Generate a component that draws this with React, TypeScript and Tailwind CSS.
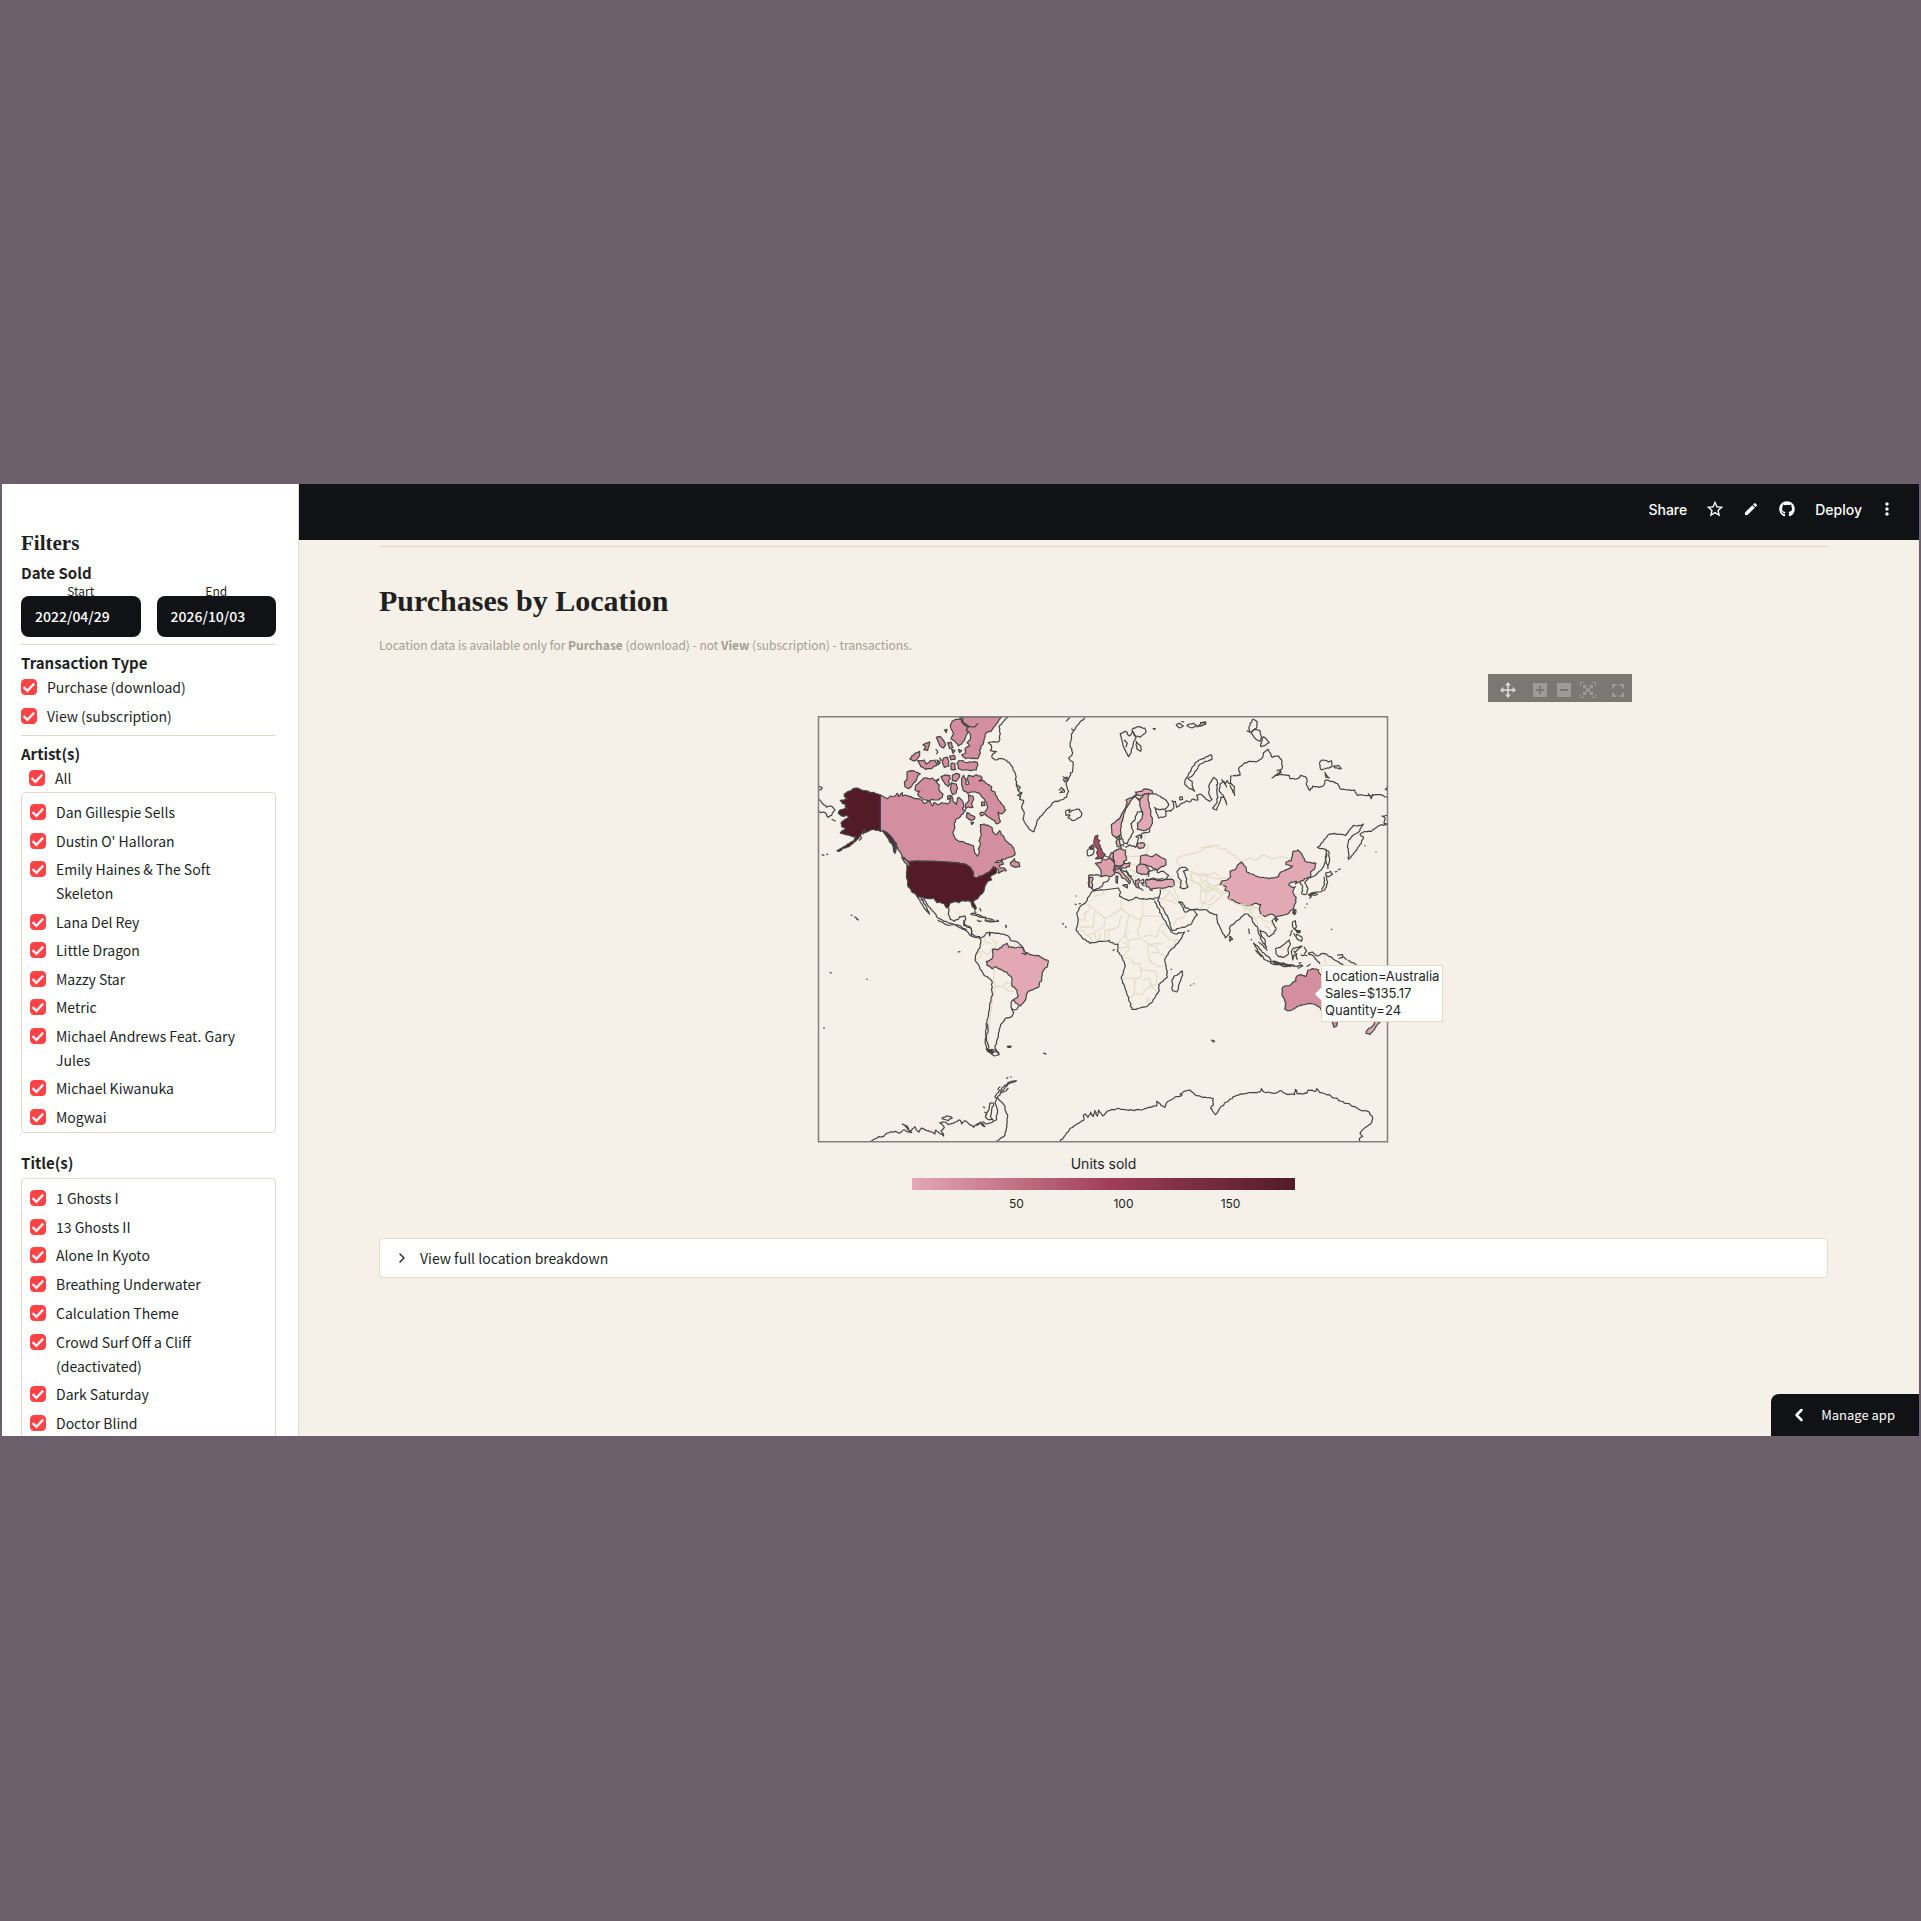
import { useState } from 'react';
import { ChevronRight, ChevronLeft } from 'lucide-react';
import { MdOutlineStarBorder, MdEdit, MdMoreVert } from 'react-icons/md';
import { FaGithub } from 'react-icons/fa';

const artists = [
  'Dan Gillespie Sells',
  "Dustin O' Halloran",
  'Emily Haines & The Soft Skeleton',
  'Lana Del Rey',
  'Little Dragon',
  'Mazzy Star',
  'Metric',
  'Michael Andrews Feat. Gary Jules',
  'Michael Kiwanuka',
  'Mogwai',
];

const titles = [
  '1 Ghosts I',
  '13 Ghosts II',
  'Alone In Kyoto',
  'Breathing Underwater',
  'Calculation Theme',
  'Crowd Surf Off a Cliff (deactivated)',
  'Dark Saturday',
  'Doctor Blind',
];

// Map shapes are grouped in sheets, three units to a pixel, each with its own origin
type Shape = { fill?: string; pts: string };
type Sheet = { at: [number, number]; land: Shape[]; coast: string[]; borders: string[] };

const US = '#531b26';
const CANADA = '#d38f9f';
const LOW = '#e2a9b5';
const MID = '#de9eac';
const UK = '#ae4d68';
const INK = '#454545';

const sheets: Sheet[] = [
  // North America and Greenland
  {
    at: [815, 710],
    land: [
      { fill: CANADA, pts: '196,255 206,260 218,266 226,258 240,258 246,250 250,260 262,248 262,258 274,256 290,262 306,266 322,272 326,280 344,272 352,288 356,278 372,284 380,278 398,282 406,272 400,262 410,258 414,272 424,284 430,262 440,270 446,284 442,296 452,300 444,312 436,320 424,326 418,340 420,352 414,366 420,384 430,392 440,394 452,400 464,404 476,408 478,424 486,438 492,430 490,416 496,404 492,392 498,378 496,362 496,344 508,342 522,348 532,354 534,366 544,374 554,362 562,376 572,392 588,404 598,422 600,434 590,440 576,444 562,448 548,452 540,458 556,456 562,452 566,462 552,466 556,474 570,476 574,482 560,484 550,490 550,480 540,472 536,470 528,480 514,490 500,498 484,504 474,498 474,484 466,472 448,462 420,458 360,454 300,453 284,455 272,450 262,440 258,430 250,420 246,408 240,396 228,380 214,368 204,362 196,364 196,310' },
      { fill: CANADA, pts: '586,458 598,446 600,454 612,458 614,470 602,472 588,466' },
      { fill: US, pts: '196,255 180,250 158,243 140,240 124,234 112,238 100,244 88,252 90,262 98,266 88,270 76,272 82,280 94,284 90,290 98,296 88,296 72,302 70,310 80,318 98,316 100,324 88,330 78,340 80,350 92,355 82,362 76,368 92,374 104,376 122,380 118,390 104,400 84,412 66,422 68,424 92,414 112,402 130,386 138,372 150,358 144,372 160,364 176,358 196,364 196,310' },
      { fill: US, pts: '284,455 300,453 360,454 420,458 448,462 466,472 474,484 474,498 484,504 500,498 514,490 528,480 536,470 544,476 546,486 534,494 526,502 530,510 518,514 512,524 508,536 500,552 490,562 478,572 474,574 478,582 484,594 480,600 472,590 468,576 458,572 440,572 432,578 418,574 404,580 400,592 396,594 386,580 376,576 366,578 356,564 340,566 322,562 306,558 294,548 284,534 278,520 274,500 276,480 276,466 284,468' },
      { fill: '#4a3038', pts: '204,364 216,368 228,380 236,392 242,406 246,416 238,410 226,398 218,384' },
      { fill: CANADA, pts: '276,186 288,182 302,186 316,192 306,202 302,214 292,224 282,236 270,230 268,216 276,208' },
      { fill: CANADA, pts: '302,226 318,212 326,204 340,206 352,204 360,212 372,206 364,216 374,226 372,240 384,252 380,264 366,270 352,268 344,274 330,270 316,262 308,252 314,244 300,240' },
      { fill: CANADA, pts: '378,200 392,194 404,196 406,206 400,212 406,222 400,230 390,222 384,212' },
      { fill: CANADA, pts: '412,196 424,190 434,194 430,206 422,214 412,212' },
      { fill: CANADA, pts: '410,218 424,222 428,236 422,250 412,254 406,238' },
      { fill: CANADA, pts: '398,258 406,256 408,266 398,268' },
      { fill: CANADA, pts: '440,204 446,196 452,208 454,224 462,222 456,206 460,196 474,200 484,194 498,198 502,206 492,214 506,212 516,222 530,230 528,240 540,246 546,260 552,272 568,290 572,300 560,312 550,306 552,316 556,336 546,342 534,330 522,322 510,312 498,318 494,310 510,306 518,294 516,280 508,268 498,256 486,248 472,246 458,250 444,240 440,222' },
      { fill: CANADA, pts: '460,254 474,258 476,268 470,280 474,292 460,290 452,296 452,282 462,270' },
      { fill: CANADA, pts: '456,308 468,316 480,322 474,330 462,328 454,322' },
      { fill: CANADA, pts: '500,276 508,276 510,286 500,288' },
      { fill: CANADA, pts: '468,336 476,338 470,344' },
      { fill: CANADA, pts: '432,152 444,152 458,158 472,156 486,156 488,168 484,180 466,182 446,180 430,176 426,160' },
      { fill: CANADA, pts: '412,34 422,28 436,26 444,40 456,52 462,62 456,72 448,92 440,102 430,108 420,94 408,86 416,72 410,60 406,46' },
      { fill: CANADA, pts: '434,21 560,21 548,38 536,52 528,64 514,68 510,80 506,96 498,108 494,120 496,130 488,146 470,146 452,146 440,134 452,128 450,116 464,108 456,98 466,88 464,70 454,60 462,50 446,42' },
      { fill: CANADA, pts: '284,146 300,130 314,124 314,136 304,150 294,152' },
      { fill: CANADA, pts: '308,152 328,150 334,162 346,152 360,150 366,166 350,176 332,178 318,170' },
      { fill: CANADA, pts: '364,82 376,80 386,92 392,104 386,114 374,106' },
      { fill: CANADA, pts: '398,98 408,96 414,112 404,116' },
      { fill: CANADA, pts: '324,104 344,96 342,108 338,122 326,120 332,110' },
      { fill: CANADA, pts: '386,144 398,142 402,168 388,172 382,156' },
      { fill: CANADA, pts: '404,138 418,136 420,148 408,150' },
      { fill: CANADA, pts: '408,160 420,162 422,178 408,178' },
      { fill: CANADA, pts: '366,150 376,158 370,164' },
      { fill: CANADA, pts: '430,118 440,122 434,128' },
      { fill: CANADA, pts: '388,60 396,58 394,68' },
      { fill: CANADA, pts: '410,118 420,122 414,130' },
      { fill: CANADA, pts: '260,442 274,450 286,464 280,468 268,456' },
      { fill: INK, pts: '234,404 242,414 240,430 236,424' },
    ],
    coast: [
      '440,22 446,38 462,50 480,50 490,40',
      '362,118 368,128 364,132',
      '374,142 380,150 374,152',
      '306,558 316,576 326,592 338,606 344,612 336,594 326,580 318,566 328,570 336,582 348,598 360,610 368,624 386,634 408,640 430,646 444,655 456,660',
      '400,592 400,610 406,628 418,634 430,628 434,620 450,618 452,626 446,640 456,648 464,650 470,662 470,680',
      '466,612 480,610 500,618 514,624 502,622 484,616 466,612',
      '510,626 530,628 538,634 524,636 510,632 512,626',
      '486,630 496,634',
      '544,630 552,634',
      '478,604 484,608',
      '494,594 498,604',
      '572,646 574,654',
      '108,614 112,617',
      '118,620 124,624 130,630 124,626',
      '20,434 28,436',
      '34,434 40,432',
      '132,392 140,382 136,390',
      '11,230 22,234 18,240 11,238',
      '11,266 34,292 48,288 60,300 50,316 40,322 30,308 18,308 11,304',
      '50,328 62,334',
      '580,22 568,32 552,50 556,72 552,94 520,98 530,110 526,122 544,124 530,138 540,150 556,146 574,150 590,168 600,190 604,220 608,240 620,250 614,268 626,272 620,290 628,310 624,326 634,346 646,360 657,366',
      '606,224 616,232 610,242',
      '616,262 608,256 622,246',
    ],
    borders: ['430,640 434,652 446,652'],
  },
  // Europe and the Arctic
  {
    at: [1020, 710],
    land: [
      { fill: LOW, pts: '274,344 288,334 302,320 314,298 322,280 318,270 334,264 350,252 346,246 366,244 370,238 384,238 396,242 396,252 386,250 374,252 360,258 348,256 334,270 322,290 314,308 308,326 304,350 302,374 288,384 276,372' },
      { fill: LOW, pts: '348,262 360,270 374,252 386,250 384,262 388,280 392,310 398,338 388,356 372,362 352,358 352,340 366,326 368,306 360,288 358,272' },
      { fill: LOW, pts: '288,396 298,386 300,402 304,412 292,410' },
      { fill: LOW, pts: '350,402 364,398 374,402 370,414 358,416 350,410' },
      { fill: UK, pts: '226,378 234,376 232,388 240,392 236,402 244,416 248,428 256,434 250,442 236,446 226,446 236,438 230,428 234,418 226,408 222,392' },
      { fill: UK, pts: '208,412 218,404 222,414 212,418' },
      { fill: MID, pts: '226,460 242,458 246,446 258,450 270,444 284,456 286,466 280,480 284,492 270,500 258,496 244,500 242,480 234,468' },
      { fill: LOW, pts: '280,426 294,418 304,416 316,420 318,438 320,450 310,456 316,466 296,468 284,464 280,448' },
      { fill: LOW, pts: '268,442 274,428 280,430 280,448 284,456' },
      { fill: LOW, pts: '284,468 300,472 312,460 330,458 328,470 312,474 296,476 286,482' },
      { fill: LOW, pts: '284,478 300,474 306,486 320,500 332,514 328,522 318,508 304,500 298,490 286,488' },
      { fill: LOW, pts: '308,526 322,524 322,534' },
      { fill: LOW, pts: '288,498 294,500 292,520 288,516' },
      { fill: LOW, pts: '208,502 218,502 216,534 206,530' },
      { fill: LOW, pts: '362,438 380,434 396,440 408,432 420,440 438,450 438,464 424,470 412,480 400,476 394,470 380,466 360,462' },
      { fill: LOW, pts: '350,470 362,462 378,466 388,480 382,492 366,494 350,486' },
      { fill: LOW, pts: '376,510 400,508 424,512 446,508 460,510 462,528 440,532 420,534 396,538 380,530 378,518' },
      { fill: LOW, pts: '346,512 356,506 360,514 354,520 358,534 348,530' },
    ],
    coast: [
      '42,366 52,330 70,310 90,290 96,280 120,270 140,262 146,244 138,222 148,200 158,180 160,160 146,144 158,128 150,100 156,70 168,50 184,32 194,22',
      '116,240 124,232 134,246 120,248 130,240',
      '128,200 144,206 134,216 130,208 142,200',
      '138,34 150,24',
      '154,56 162,62',
      '136,304 150,298 148,308 164,300 178,298 186,310 180,322 160,332 144,324 150,316 138,316 136,304',
      '300,70 316,64 328,78 338,64 348,84 340,100 334,124 326,140 316,120 308,100 300,70',
      '312,90 322,100 318,112',
      '336,58 352,50 374,54 378,66 360,82 344,76 336,58',
      '348,94 362,108 362,124 350,116 348,94',
      '398,56 406,56 402,60',
      '468,44 480,40 490,48 478,54 468,44',
      '484,34 492,36',
      '500,46 520,40 530,46 516,54 500,46',
      '530,52 544,38 558,36 548,46 530,52',
      '574,134 576,148 556,154 540,162 530,180 518,196 504,206 516,214 518,232 524,244 504,232 494,222 498,206 506,190 516,172 530,156 548,146 562,140 574,134',
      '396,248 420,258 440,272 446,286 434,298 420,300 404,292 408,306 416,324 430,322 438,318 436,302 452,304 462,290 456,272 466,274 470,292 486,280 500,272 510,276 516,268 534,270 530,256 540,252',
      '478,262 486,260 488,268 480,270 478,262',
      '302,374 312,400 322,402 330,384 340,364 332,342 346,326 352,306 364,304 368,316',
      '288,386 298,378 304,390',
      '300,406 310,404 312,410',
      '316,412 328,404 346,412 352,402 356,384 348,380 360,374 364,386 366,370 388,366 390,358',
      '202,420 212,412 222,420 218,434 204,438 202,420',
      '256,438 266,442',
      '206,530 206,496 230,494 246,500',
      '268,502 262,514 250,518 246,530 232,536 220,540 214,534',
      '300,480 316,484 330,500 340,514 346,526',
      '318,480 326,494 336,502',
      '384,500 388,484 400,480 412,480 412,488 430,484 446,496 440,506 420,508 400,504 384,510 378,506',
      '362,512 370,508 372,520 364,518 374,528',
      '358,534 370,542',
      '388,540 398,542',
      '470,486 480,474 496,472 504,480 490,484 496,498 500,506 498,516 504,530 494,536 480,532 484,512 474,498 470,486',
    ],
    borders: [
      '470,450 476,440 510,432 540,424 560,412 580,410 600,408',
      '470,450 472,464 484,466',
      '504,482 520,486 540,500 560,496 580,504 600,508',
      '510,500 520,486',
      '540,500 548,520 580,540 600,536',
      '510,510 530,520 560,540 556,570',
      '448,520 466,510 480,520',
      '442,500 466,498',
      '376,364 372,396',
      '374,402 384,406 378,430',
      '318,438 340,440 362,438',
      '320,430 318,418',
      '330,462 350,466',
      '330,478 346,486 340,500',
      '350,494 346,510',
    ],
  },
  // Siberia, China, Japan
  {
    at: [1200, 710],
    land: [
      { fill: LOW, pts: '124,456 138,472 140,486 158,492 172,500 206,506 236,500 240,488 262,478 278,468 258,464 258,456 274,452 278,426 294,420 304,430 314,452 336,460 348,460 344,476 332,486 332,500 314,506 298,516 286,522 290,514 274,516 266,524 276,532 286,530 278,546 288,560 288,576 280,596 268,608 248,616 228,622 214,612 196,620 184,612 178,598 182,584 164,580 148,588 128,584 104,574 84,566 88,546 74,540 78,530 60,524 64,514 82,510 92,500 90,484 104,480 112,466' },
      { fill: LOW, pts: '226,624 234,628 228,635' },
      { fill: INK, pts: '326,554 338,548 348,550 334,556' },
    ],
    coast: [
      '0,252 14,262 28,274 36,268 26,250 28,224 42,202 52,214 50,240 54,262 46,284 38,294 50,300 58,280 62,262 72,262 80,284 76,270 70,256 58,244 60,222 70,214 80,232',
      '64,208 76,222 82,212 90,222 92,198 104,196 120,196 116,176 130,162 150,154 172,154 188,142 190,128 204,118 212,130 216,142 236,138 246,154 246,176 236,190 216,204 228,196 244,194 268,196 270,206 292,206 302,196 320,204 320,226 330,242 338,228 356,232 370,228 376,210 396,214 414,222 420,236 440,240 464,240 472,256 492,256 512,258 530,254 548,256 562,262',
      '230,184 240,180 244,188 232,192',
      '504,250 514,266 518,252',
      '90,218 104,230 104,256 98,240 90,226',
      '146,66 150,40 160,28 172,36 170,54 158,62 146,66',
      '152,70 164,58 180,62 184,80 180,94 164,84 152,70',
      '140,62 150,66',
      '182,110 190,80 200,88 208,98 196,106 182,110',
      '358,160 366,150 380,152 386,156 394,152 396,170 380,174 364,180 358,160',
      '400,168 414,166 424,176 406,174 400,168',
      '374,186 380,196 388,204 378,202 374,186',
      '562,230 556,238 562,240',
      '562,316 546,318 556,326 552,340 562,342 540,346 524,356 514,364 490,366 480,374 490,380 484,400 470,420 456,436 446,448 446,430 442,410 446,390 462,374 476,366 490,342 478,346 460,346 450,358 438,376 416,372 388,372 376,386 362,404 352,412 364,416 376,418 380,430 376,456 366,476 350,492 330,504',
      '376,418 386,424 388,456 384,476 378,452 378,430',
      '300,516 308,530 306,552 320,552 324,536 314,518 328,504',
      '376,490 392,484 398,492 386,500 378,496 376,490',
      '378,498 382,520 374,540 362,546 346,546 330,552',
      '372,500 374,524 364,538',
      '326,556 334,560 328,566',
      '340,556 354,552',
      '404,486 412,484',
      '414,480 422,476',
      '494,406 496,409',
      '526,426 530,426',
      '320,584 322,580',
      '314,594 316,592',
      '282,598 288,600 284,614 280,610 282,598',
      '0,38 14,36 18,42 6,46',
    ],
    borders: [
      '0,412 20,410 40,404 60,416 78,416 86,428 104,436 124,454 150,444 166,452 190,434 216,446 250,440 276,454',
      '0,490 20,494 44,488 64,504 84,506',
      '10,510 30,520 20,534 50,524 60,524',
      '0,540 24,548 40,536 62,548 78,540',
      '0,580 30,572 44,554',
      '100,574 130,588 144,592',
      '132,592 146,600 160,592 176,598',
      '150,600 150,616 164,624 174,640',
    ],
  },
  // South America and West Antarctica
  {
    at: [815, 920],
    land: [
      { fill: LOW, pts: '532,88 548,90 560,82 576,70 582,82 600,84 622,82 630,96 644,104 668,106 686,116 700,122 698,138 684,154 680,176 672,200 656,208 640,214 634,224 632,238 616,258 594,240 610,228 606,210 590,196 590,172 572,156 556,148 540,140 532,146 516,136 514,124 530,118 534,104' },
      { fill: INK, pts: '514,386 526,390 538,396 532,400 518,394' },
      { fill: INK, pts: '577,379 589,379 586,382 579,382' },
    ],
    coast: [
      '368,0 386,10 402,16 420,14 432,22 450,30 462,42 480,52 496,56 494,50 480,48 470,40 468,24 446,16 446,0',
      '496,54 508,48 514,38 524,36 524,48 528,38 540,40 562,42 580,48 586,60 610,68 622,80 628,96',
      '620,100 632,104 636,96',
      '496,56 496,78 484,100 480,120 494,142 510,168 530,182 532,220 524,262 516,300 512,340 510,368 516,390 530,400',
      '516,310 520,330 514,350 518,370 522,384',
      '552,404 540,384 546,360 550,340 556,320 570,296 590,290 596,278 588,262 590,244 594,240',
      '588,266 600,270 612,258',
      '524,390 540,390 552,404 538,408 528,402',
      '684,400 694,404',
      '428,96 436,95',
      '44,157 50,160',
      '154,178 158,178',
      '26,322 28,326',
      '742,11 746,12',
      '751,19 753,22',
      '572,14 574,22',
      '492,5 500,3',
      '514,5 552,3',
      '168,664 190,650 206,650 214,640 240,634 252,640 264,630 290,638 276,624 262,612 276,618 284,634 300,620 312,636 320,624 340,632 360,642 362,630 370,636 386,648 378,632 388,622 374,608 390,606 400,614 420,606 434,600 440,612 450,602 462,612 476,622 492,610 510,620 498,606 484,616',
      '504,604 512,612 530,608 544,600 548,570 540,548 550,528 560,514 580,492 604,482 584,486 566,500 552,512 540,530',
      '556,520 574,512 580,504',
      '538,530 550,536 568,556 578,590 576,620 566,650 544,664',
      '504,560 510,564',
      '508,576 516,580 512,590 520,572 524,550 536,550 526,590 534,600 518,598 510,590',
      '380,596 394,588 412,594 400,602 380,596',
      '548,510 556,500',
      '574,476 580,472',
      '586,472 590,470',
    ],
    borders: [
      '530,60 544,66 542,82 532,88',
      '508,48 510,66 530,72',
      '484,104 500,92 516,104 530,92',
      '484,120 496,112 502,98',
      '516,138 530,148 538,150 536,180 542,198 532,240 526,290 520,340 518,380',
      '542,200 566,200 572,188 588,190',
      '566,200 582,214 604,212',
      '586,62 588,78',
      '600,68 600,82',
    ],
  },
  // Africa, southern Asia, Oceania and East Antarctica
  {
    at: [1060, 860],
    land: [
      { fill: CANADA, pts: '744,330 756,326 776,330 778,340 784,346 810,360 820,420 784,452 776,440 760,432 740,432 716,438 700,448 682,452 674,446 678,430 666,400 668,382 690,376 708,362 708,352 724,344 738,350' },
      { fill: CANADA, pts: '816,484 832,486 830,498 822,502' },
      { fill: LOW, pts: '962,484 950,496 940,512 930,524 918,520 922,510 938,498 948,484' },
      { fill: INK, pts: '706,208 712,212 720,212 720,218 712,218' },
      { fill: INK, pts: '640,308 654,308 676,313 690,316 664,314' },
    ],
    coast: [
      '96,94 130,90 176,84 182,96 178,108 206,122 218,118 226,112 250,116 280,118 298,110 300,88',
      '96,94 84,112 78,126 62,138 50,160 54,184 48,210 66,232 90,250 120,244 148,242 162,252 174,252 172,274 186,292 196,318 190,336 184,356 196,388 206,416 216,448 240,444 260,440 278,424 290,402 298,392 296,374 322,352 320,330 314,298 330,272 350,252 366,232 374,216 346,222 334,216 320,194 306,168 292,142 284,122',
      '298,112 294,124 312,152 328,184 336,212 362,204 392,194 412,164 404,152 392,150 374,156 364,136 356,126 368,128 374,142 388,148 404,148 440,150 456,160 470,164 472,182 484,210 496,234 508,222 510,200 528,184 552,164 564,162 574,172 582,190 592,200 596,220 604,240 620,262 616,244 604,226 600,210 616,218 628,230 642,220 648,204 636,182 648,170',
      '508,228 518,238 510,244 508,228',
      '368,332 368,346 358,370 350,396 338,392 336,364 342,348 356,342 368,332',
      '580,248 596,262 616,284 632,298 632,306 616,300 598,278 584,256 580,248',
      '630,304 652,306 676,312 702,316 680,320 650,314 630,308',
      '586,270 592,278 606,290',
      '700,320 728,316',
      '712,324 730,318',
      '740,320 752,312',
      '596,246 612,262 622,272',
      '646,266 660,262 676,250 688,240 690,256 684,268 684,284 672,292 656,290 648,280 646,266',
      '694,272 700,264 716,262 726,258 712,270 702,274 710,282 712,298 704,284 698,300 696,284 694,272',
      '698,186 706,182 710,200 704,208 698,200 698,186',
      '710,222 720,228 726,232 724,244 712,238 708,230 710,222',
      '698,210 690,228',
      '700,220 706,230',
      '732,260 740,272 734,282',
      '722,284 742,288',
      '744,280 758,276 772,288 790,280 812,290 832,304 850,314',
      '744,280 760,288 770,300 780,312',
      '716,310 724,308',
      '832,286 848,284 848,292 836,296',
      '850,290 860,300',
      '864,300 878,308 890,314',
      '566,206 568,222',
      '572,238 576,240',
      '700,152 704,148 702,162 698,158 700,152',
      '814,206 816,210',
      '452,540 464,544 456,546',
      '44,132 50,134',
      '56,132 62,130',
      '46,108 50,108',
      '8,190 11,193',
      '16,199 19,202',
      '332,328 336,328',
      '390,376 394,376',
      '400,372 403,371',
      '382,214 388,212',
      '158,272 164,268',
      '0,844 14,828 28,808 50,792 72,780 70,766 76,762 84,772 92,756 100,770 104,752 112,768 116,750 128,768 144,752 170,746 200,750 240,750 266,742 290,738 290,724 314,742 320,728 344,712 366,706 360,702 372,694 390,690 404,704 430,712 460,716 460,736 452,744 466,764 480,744 500,726 530,706 560,700 600,696 604,686 612,696 640,700 664,692 684,704 704,704 706,688 712,702 740,700 744,690 768,694 770,686 780,698 808,704 816,712 830,714 836,722 860,730 884,740 900,750 924,754 938,772 932,792 912,806 900,820 908,830 898,836 900,846',
    ],
    borders: [
      '248,116 248,168 306,168',
      '248,168 240,196 232,210 238,230',
      '182,118 184,146 206,164 240,180 246,170',
      '100,110 132,100 128,90',
      '50,178 74,180 74,158 88,150 88,136 78,132',
      '88,136 104,150 134,174 150,168 184,146',
      '104,150 100,200 70,202 54,198',
      '134,174 132,200 116,210 100,214',
      '182,168 176,200 150,210 132,212',
      '206,164 200,200 194,224 206,240',
      '54,212 70,212 80,226 92,232 96,248',
      '80,226 104,220 110,244',
      '134,212 136,242',
      '120,218 118,244',
      '146,210 148,240',
      '174,250 190,230 206,216',
      '190,250 214,240 240,234 268,254 290,250 310,252',
      '250,230 270,226 290,230 300,200 316,188',
      '304,212 330,240 352,240 340,256 318,262',
      '174,262 200,262 206,250',
      '186,292 206,270 206,256',
      '190,294 214,296 222,312 240,310 246,330 262,330',
      '264,256 264,276 268,300 272,310',
      '272,276 296,278 316,290',
      '268,300 290,320 318,318',
      '264,256 290,260 296,278',
      '186,354 236,356 244,338 240,320',
      '224,358 224,380 222,404 206,416',
      '224,402 246,404 254,390 272,376 268,356 246,360',
      '272,376 288,374 292,340 276,332 262,332',
      '270,376 286,390 292,396',
      '258,418 266,414 268,424 260,426 258,418',
      '300,92 320,88 330,96 318,110 302,116',
      '330,96 348,120 356,126',
      '302,116 330,122 350,132',
      '350,178 376,168 380,158',
      '344,188 350,178 336,200',
      '340,76 346,100 358,118',
      '390,60 420,70 426,90 420,110 430,130 422,146',
      '394,36 396,56 390,60',
      '400,40 440,44 440,70 470,80 482,62',
      '426,90 450,90 470,76 490,76',
      '430,130 452,136 470,120 490,100 502,100',
      '440,150 452,136',
      '500,116 530,132 560,136',
      '552,140 570,138 592,142',
      '552,162 556,144 580,150 570,170',
      '590,176 600,168 610,180 628,186 640,196',
      '600,168 610,162',
      '592,190 592,210',
      '612,198 628,202 632,222',
      '654,262 668,268 680,262',
      '794,284 796,312',
    ],
  },
];

// Stable pseudo-random offset, the same whichever way a shared edge is walked
function wobble(a: number, b: number) {
  const n = Math.sin(Math.round(a) * 12.9898 + Math.round(b) * 78.233) * 43758.5453;
  return (n - Math.floor(n) - 0.5) * 2;
}

function toPath(pts: string, rough: number) {
  const points = pts.split(' ').map((p) => p.split(',').map(Number));
  let d = `M${points[0][0]} ${points[0][1]}`;
  for (let i = 1; i < points.length; i++) {
    const [x0, y0] = points[i - 1];
    const [x1, y1] = points[i];
    const len = Math.hypot(x1 - x0, y1 - y0);
    // Long edges are ruled borders and stay straight
    const steps = len < 45 ? Math.max(1, Math.round(len / 6)) : 1;
    for (let s = 1; s < steps; s++) {
      const x = x0 + ((x1 - x0) * s) / steps;
      const y = y0 + ((y1 - y0) * s) / steps;
      d += `L${(x + wobble(x, y) * rough).toFixed(1)} ${(y + wobble(y, x) * rough).toFixed(1)}`;
    }
    d += `L${x1} ${y1}`;
  }
  return d;
}

function WorldMap() {
  return (
    <svg viewBox="815 710 577 436" className="block h-[436px] w-[577px]" role="img" aria-label="Units sold by country">
      {sheets.map((sheet) => (
        <g
          key={sheet.at.join()}
          transform={`translate(${sheet.at[0]} ${sheet.at[1]}) scale(0.33333)`}
          fill="none"
          strokeLinejoin="round"
        >
          {sheet.borders.map((b) => (
            <path key={b} d={toPath(b, 1)} stroke="#e3dcc8" strokeWidth="3.4" />
          ))}
          {sheet.land.map((s) => (
            <path key={s.pts} d={toPath(s.pts, 2) + 'Z'} fill={s.fill} stroke={INK} strokeWidth="3.6" />
          ))}
          {sheet.coast.map((c) => (
            <path key={c} d={toPath(c, 2)} stroke={INK} strokeWidth="3.6" />
          ))}
        </g>
      ))}
      <rect x="818.5" y="716.75" width="569" height="425" fill="none" stroke="#83817a" strokeWidth="1.5" />
    </svg>
  );
}

function Check({ label, className = '' }: { label: string; className?: string }) {
  const [checked, setChecked] = useState(true);

  return (
    <label className={`flex items-start gap-[10px] text-[14px] leading-6 ${className}`}>
      <span className="relative mt-1 size-4 shrink-0">
        <input
          type="checkbox"
          checked={checked}
          onChange={(e) => setChecked(e.target.checked)}
          className="block size-4 appearance-none rounded-[4px] border border-[#d9d2bd] checked:border-[#ff4345] checked:bg-[#ff4345]"
        />
        {checked && (
          <svg viewBox="0 0 16 16" className="pointer-events-none absolute inset-0 size-4">
            <path d="M2.6 8.2 L6.4 11.8 L13.2 4.6" fill="none" stroke="#f4f6fb" strokeWidth="2.3" />
          </svg>
        )}
      </span>
      <span>{label}</span>
    </label>
  );
}

function DateField({ id, label, initial }: { id: string; label: string; initial: string }) {
  const [value, setValue] = useState(initial);

  return (
    <div className="min-w-0 flex-1">
      <label htmlFor={id} className="block text-center text-[12px] leading-[11px]">
        {label}
      </label>
      <input
        id={id}
        type="text"
        value={value}
        onChange={(e) => setValue(e.target.value)}
        className="block h-[41px] w-full rounded-lg bg-[#101216] px-[14px] pb-[2px] text-[14px] font-medium text-white"
      />
    </div>
  );
}

function Sidebar() {
  return (
    <aside className="flex w-[297px] shrink-0 flex-col overflow-hidden border-r border-[#e2dbc6] bg-white pt-[45px] pr-[22px] pl-[19px]">
      <h2 className="font-['Liberation_Serif',serif] text-[21px] leading-7 font-bold">Filters</h2>
      <h3 className="mt-1 text-[15px] leading-6 font-bold">Date Sold</h3>
      <div className="flex gap-4">
        <DateField id="start" label="Start" initial="2022/04/29" />
        <DateField id="end" label="End" initial="2026/10/03" />
      </div>
      <hr className="mt-[7px] border-[#e2dbc6]" />

      <h3 className="mt-[6px] text-[15px] leading-6 font-bold">Transaction Type</h3>
      <div className="flex flex-col gap-[5px]">
        <Check label="Purchase (download)" />
        <Check label="View (subscription)" />
      </div>
      <hr className="mt-[7px] border-[#e2dbc6]" />

      <h3 className="mt-[6px] text-[15px] leading-6 font-bold">Artist(s)</h3>
      <Check label="All" className="pl-2" />
      <div className="mt-[2px] flex h-[341px] shrink-0 flex-col justify-between rounded-[4px] border border-[#e2dbc6] pt-[7px] pr-5 pb-[3px] pl-2">
        {artists.map((a) => (
          <Check key={a} label={a} />
        ))}
      </div>

      <h3 className="mt-[18px] text-[15px] leading-6 font-bold">Title(s)</h3>
      <div className="mt-[3px] flex h-[260px] shrink-0 flex-col justify-between rounded-t-[4px] border border-b-0 border-[#e2dbc6] pt-[7px] pr-5 pb-[3px] pl-2">
        {titles.map((t) => (
          <Check key={t} label={t} />
        ))}
      </div>
    </aside>
  );
}

function Header() {
  return (
    <header className="flex h-14 shrink-0 items-center justify-end bg-[#101216] pr-[22px] pb-[6px] font-['Inter',sans-serif] text-[14px] font-medium text-white">
      <button className="mr-[18px]">Share</button>
      <button aria-label="Favorite" className="mr-[18px]">
        <MdOutlineStarBorder className="size-5" />
      </button>
      <button aria-label="Edit" className="mr-5">
        <MdEdit className="size-4" />
      </button>
      <button aria-label="View source" className="mr-5">
        <FaGithub className="size-4" />
      </button>
      <button className="mr-[15px]">Deploy</button>
      <button aria-label="Menu">
        <MdMoreVert className="size-5" />
      </button>
    </header>
  );
}

function ModeBar() {
  return (
    <div className="flex h-7 w-36 items-end bg-[#7a7872] pb-1 text-[#9d9b95]">
      <button aria-label="Pan" className="ml-3 text-[#dddbd6]">
        <svg viewBox="0 0 16 16" className="block size-4" fill="currentColor">
          <path d="M8 0 L11 3.4 H8.8 V7.2 H12.6 V5 L16 8 L12.6 11 V8.8 H8.8 V12.6 H11 L8 16 L5 12.6 H7.2 V8.8 H3.4 V11 L0 8 L3.4 5 V7.2 H7.2 V3.4 H5 Z" />
        </svg>
      </button>
      <button aria-label="Zoom in" className="ml-4">
        <svg viewBox="0 0 16 16" className="block size-4" fill="currentColor" fillRule="evenodd">
          <path d="M1 1 H15 V15 H1 Z M7 4 V7 H4 V9 H7 V12 H9 V9 H12 V7 H9 V4 Z" />
        </svg>
      </button>
      <button aria-label="Zoom out" className="ml-2">
        <svg viewBox="0 0 16 16" className="block size-4" fill="currentColor" fillRule="evenodd">
          <path d="M1 1 H15 V15 H1 Z M4 7 V9 H12 V7 Z" />
        </svg>
      </button>
      <button aria-label="Reset view" className="ml-2">
        <svg viewBox="0 0 16 16" className="block size-4" fill="none" stroke="currentColor">
          <path d="M0.5 4 V0.5 H4 M12 0.5 H15.5 V4 M15.5 12 V15.5 H12 M4 15.5 H0.5 V12" />
          <path d="M4 4 L12 12 M12 4 L4 12" strokeWidth="1.6" />
          <path d="M3 3 H7 L3 7 Z M13 3 V7 L9 3 Z M13 13 H9 L13 9 Z M3 13 V9 L7 13 Z" fill="currentColor" stroke="none" />
        </svg>
      </button>
      <button aria-label="Fullscreen" className="ml-[14px]">
        <svg viewBox="0 0 16 16" className="block size-4" fill="none" stroke="currentColor" strokeWidth="2">
          <path d="M3 6.5 V3 H6.5 M9.500 3 H13 V6.5 M13 10.5 V14 H9.5 M6.5 14 H3 V10.5" />
        </svg>
      </button>
    </div>
  );
}

export default function App() {
  return (
    <div className="flex h-screen bg-[#6c606d] px-[2px] pt-[484px] pb-[485px] font-['Noto_Sans_CJK_SC','Noto_Sans',sans-serif] text-[#221f1f]">
      <div className="relative flex min-w-0 flex-1 overflow-hidden bg-[#f5f0e8]">
        <Sidebar />

        <div className="flex min-w-0 flex-1 flex-col">
          <Header />
          <main className="pr-[91px] pl-20">
            <hr className="mt-[6px] border-[#dfdac2]" />
            <h1 className="mt-9 font-['Liberation_Serif',serif] text-[30px] leading-9 font-bold">
              Purchases by Location
            </h1>
            <p className="mt-4 text-[12px] leading-5 text-[#a39e91]">
              Location data is available only for <strong>Purchase</strong> (download) - not{' '}
              <strong>View</strong> (subscription) - transactions.
            </p>

            <section className="relative mt-[19px] flex flex-col items-center font-['Inter',sans-serif]">
              <div className="flex w-full justify-end pr-[196px]">
                <ModeBar />
              </div>
              <div className="relative mt-2">
                <WorldMap />
                <div className="absolute top-[255px] left-[506px] border border-[#e2dbc6] bg-white px-[3px] py-[2px] text-[13px] leading-[17px] whitespace-nowrap">
                  <svg viewBox="0 0 7 14" className="absolute top-[21px] -left-[7px] h-[14px] w-[7px]">
                    <path d="M7 0 L0 7 L7 14" fill="#fff" stroke="#e2dbc6" />
                  </svg>
                  <div>Location=Australia</div>
                  <div>Sales=$135.17</div>
                  <div>Quantity=24</div>
                </div>
              </div>
              <div className="mt-[10px] w-[383px]">
                <div className="text-center text-[14px] leading-4">Units sold</div>
                <div className="mt-[6px] h-3 bg-linear-to-r from-[#e2a9b5] via-[#a3405a] to-[#531b26]" />
                <div className="mt-[6px] flex pl-[51px] text-[12px] leading-4">
                  <span className="w-[107px] shrink-0 text-center">50</span>
                  <span className="w-[107px] shrink-0 text-center">100</span>
                  <span className="w-[107px] shrink-0 text-center">150</span>
                </div>
              </div>
            </section>

            <button className="mt-[26px] flex h-10 w-full items-center gap-[10px] rounded-[4px] border border-[#e2dbc6] bg-white pl-[14px] text-[14px]">
              <ChevronRight className="size-4" />
              View full location breakdown
            </button>
          </main>
        </div>

        <button className="absolute right-0 bottom-0 flex h-[42px] items-center gap-3 rounded-tl-lg bg-[#101216] pr-6 pl-[18px] text-[13px] text-white">
          <ChevronLeft className="size-5" strokeWidth={3} />
          Manage app
        </button>
      </div>
    </div>
  );
}
